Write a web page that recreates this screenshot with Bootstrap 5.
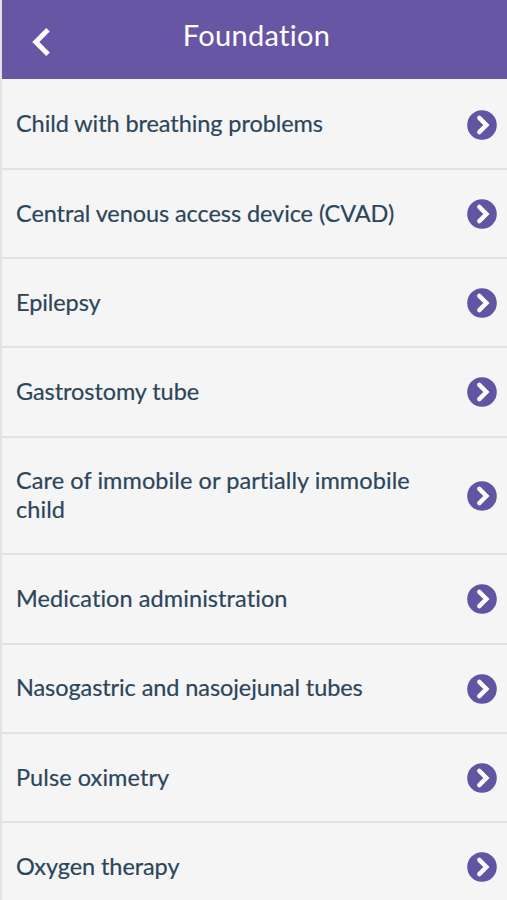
<!DOCTYPE html>
<html lang="en">
<head>
<meta charset="utf-8">
<meta name="viewport" content="width=device-width, initial-scale=1">
<title>Foundation</title>
<link rel="stylesheet" href="https://cdn.jsdelivr.net/npm/bootstrap@5.3.0/dist/css/bootstrap.min.css">
<style>
body { background: #f5f5f5; font-family: Lato, "Open Sans", sans-serif; font-variant-ligatures: none; }
.screen { border-left: 2px solid #e3e3e3; }
.topbar { height: 79px; background: #6756a4; }
.back { width: 60px; padding-left: 28px; padding-top: 4px; }
.title { font-size: 29px; line-height: 36px; letter-spacing: .3px; margin-top: -9px; padding-right: 56px; }
.topics { padding-top: 1.6px; }
.topics .topic { background: #f5f5f5; color: #2b465b; border: 0; border-bottom: 2px solid #e2e2e3; border-radius: 0; padding: 28.75px 10px 30px 14px; font-size: 23.5px; line-height: 28.5px; letter-spacing: -.08px; -webkit-text-stroke: .2px #2b465b; }
.topics .wide { letter-spacing: .08px; }
.topic svg { margin: -2.5px 0 -4.5px; }
.label { max-width: 410px; }
</style>
<script src="https://cdn.jsdelivr.net/npm/bootstrap@5.3.0/dist/js/bootstrap.bundle.min.js"></script>
</head>
<body class="overflow-hidden">
<svg width="0" height="0" class="d-none">
  <symbol id="go" viewBox="0 0 30 30"><circle cx="15" cy="15" r="14.8" fill="#6354a3"/><path d="M12.3 7.9 19.4 15 12.3 22.1" fill="none" stroke="#fff" stroke-width="4.4" stroke-linecap="round"/></symbol>
</svg>
<div class="screen vh-100 overflow-hidden">
  <header class="topbar d-flex align-items-center text-white">
    <a href="#" class="back d-flex" aria-label="Back"><svg width="22" height="30" viewBox="0 0 22 30"><path d="M18 2.8 5.8 15 18 27.2" fill="none" stroke="#fff" stroke-width="5"/></svg></a>
    <h1 class="title flex-grow-1 text-center fw-normal mb-0">Foundation</h1>
  </header>
  <div class="list-group list-group-flush topics">
    <a href="#" class="topic list-group-item d-flex align-items-center justify-content-between"><span class="label">Child with breathing problems</span><svg width="30" height="30"><use href="#go"/></svg></a>
    <a href="#" class="topic list-group-item d-flex align-items-center justify-content-between"><span class="label">Central venous access device (CVAD)</span><svg width="30" height="30"><use href="#go"/></svg></a>
    <a href="#" class="topic list-group-item d-flex align-items-center justify-content-between"><span class="label">Epilepsy</span><svg width="30" height="30"><use href="#go"/></svg></a>
    <a href="#" class="topic list-group-item d-flex align-items-center justify-content-between"><span class="label">Gastrostomy tube</span><svg width="30" height="30"><use href="#go"/></svg></a>
    <a href="#" class="topic wide list-group-item d-flex align-items-center justify-content-between"><span class="label">Care of immobile or partially immobile child</span><svg width="30" height="30"><use href="#go"/></svg></a>
    <a href="#" class="topic wide list-group-item d-flex align-items-center justify-content-between"><span class="label">Medication administration</span><svg width="30" height="30"><use href="#go"/></svg></a>
    <a href="#" class="topic list-group-item d-flex align-items-center justify-content-between"><span class="label">Nasogastric and nasojejunal tubes</span><svg width="30" height="30"><use href="#go"/></svg></a>
    <a href="#" class="topic wide list-group-item d-flex align-items-center justify-content-between"><span class="label">Pulse oximetry</span><svg width="30" height="30"><use href="#go"/></svg></a>
    <a href="#" class="topic list-group-item d-flex align-items-center justify-content-between"><span class="label">Oxygen therapy</span><svg width="30" height="30"><use href="#go"/></svg></a>
  </div>
</div>
</body>
</html>
